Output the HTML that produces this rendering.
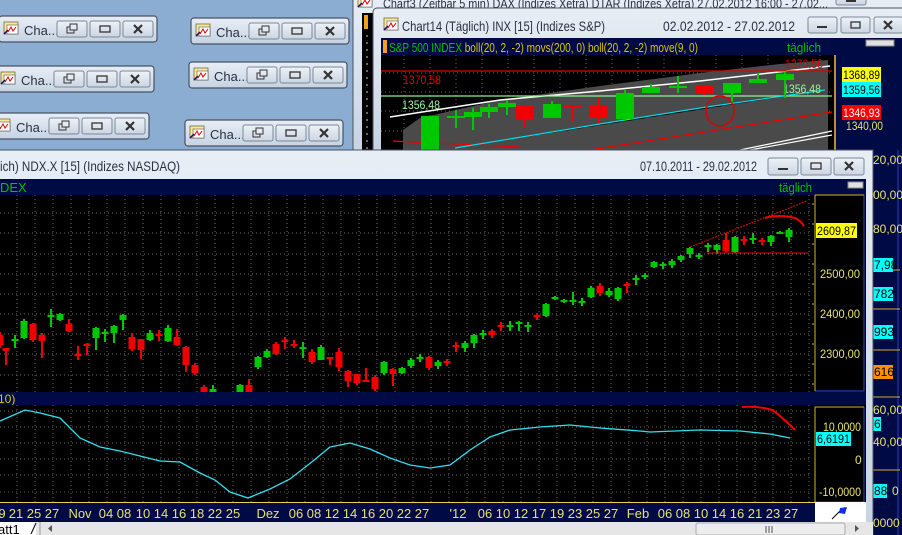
<!DOCTYPE html>
<html><head><meta charset="utf-8"><style>
html,body{margin:0;padding:0;width:902px;height:535px;overflow:hidden;background:#8badd2}
svg{display:block}
text{font-family:"Liberation Sans",sans-serif}
</style></head><body>
<svg width="902" height="535" viewBox="0 0 902 535" xmlns="http://www.w3.org/2000/svg">
<defs>
<linearGradient id="bar" x1="0" y1="0" x2="0" y2="1"><stop offset="0" stop-color="#e8eef6"/><stop offset="1" stop-color="#c6d3e3"/></linearGradient>
<linearGradient id="btn" x1="0" y1="0" x2="0" y2="1"><stop offset="0" stop-color="#eef2f8"/><stop offset="1" stop-color="#cbd5e2"/></linearGradient>
<g id="ico"><rect x="0" y="0" width="14" height="12" fill="#f4e8a0" stroke="#7a6a30" stroke-width="0.8"/><rect x="3" y="3" width="11" height="9" fill="#fff" stroke="#555" stroke-width="0.6"/><path d="M4 10 L7 5 L9 9 L12 5" stroke="#d00" fill="none" stroke-width="1"/><path d="M0 12 L4 8" stroke="#208" stroke-width="1.5"/></g>
<g id="b3">
<rect x="0" y="0" width="30" height="16" rx="2" fill="url(#btn)" stroke="#7c8797"/>
<rect x="33" y="0" width="30" height="16" rx="2" fill="url(#btn)" stroke="#7c8797"/>
<rect x="66" y="0" width="30" height="16" rx="2" fill="url(#btn)" stroke="#7c8797"/>
<rect x="10" y="6" width="7" height="6" fill="none" stroke="#333"/><rect x="13" y="3" width="7" height="6" fill="#e4eaf2" stroke="#333"/>
<rect x="43" y="5" width="10" height="6" fill="none" stroke="#333" stroke-width="1.3"/>
<path d="M77 4 L85 12 M85 4 L77 12" stroke="#333" stroke-width="2.2"/>
</g>
<g id="mini"><rect x="0" y="0" width="158" height="26" rx="3" fill="url(#bar)" stroke="#4a5262" stroke-width="1.2"/><use href="#ico" x="5" y="6"/><text x="25" y="19" font-size="13" fill="#2a3140">Cha...</text><use href="#b3" x="58" y="5"/></g>
</defs>

<use href="#mini" x="-1" y="16"/>
<use href="#mini" x="191" y="18"/>
<use href="#mini" x="-4" y="66"/>
<use href="#mini" x="189" y="62"/>
<use href="#mini" x="-9" y="113"/>
<use href="#mini" x="185" y="120"/>

<!-- Chart3 back window -->
<rect x="353" y="-5" width="560" height="160" fill="url(#bar)" stroke="#4a5262"/>
<use href="#ico" x="358" y="-5"/>
<text x="383" y="8" font-size="13" fill="#2a3140" textLength="445" lengthAdjust="spacingAndGlyphs">Chart3 (Zeitbar 5 min)  DAX (Indizes Xetra) DTAR (Indizes Xetra) 27.02.2012 16:00 - 27.02...</text>
<rect x="836" y="-8" width="30" height="13" rx="2" fill="url(#btn)" stroke="#7c8797"/><rect x="846" y="0" width="10" height="2" fill="#333"/>
<rect x="362" y="13" width="14" height="140" fill="#000"/>
<rect x="364" y="15" width="4" height="14" fill="#f0a020"/>
<path d="M367 35 V150" stroke="#ccc" stroke-dasharray="2,5"/>

<!-- Chart14 window -->
<rect x="373" y="8" width="540" height="150" rx="4" fill="url(#bar)" stroke="#4a5262"/>
<use href="#ico" x="384" y="18"/>
<text x="402" y="31" font-size="14" fill="#2a3140" textLength="203" lengthAdjust="spacingAndGlyphs">Chart14 (Täglich)  INX [15] (Indizes S&amp;P)</text>
<text x="663" y="31" font-size="14" fill="#2a3140" textLength="132" lengthAdjust="spacingAndGlyphs">02.02.2012 - 27.02.2012</text>
<g transform="translate(788,17)"><rect x="20" y="0" width="29" height="16" rx="2" fill="url(#btn)" stroke="#7c8797"/><rect x="53" y="0" width="29" height="16" rx="2" fill="url(#btn)" stroke="#7c8797"/><rect x="86" y="0" width="29" height="16" rx="2" fill="url(#btn)" stroke="#7c8797"/><rect x="29" y="9" width="10" height="2" fill="#333"/><rect x="63" y="5" width="9" height="6" fill="none" stroke="#333" stroke-width="1.3"/><path d="M96 4 L104 12 M104 4 L96 12" stroke="#333" stroke-width="2.2"/></g>
<rect x="381" y="38" width="530" height="17" fill="#000a44"/>
<rect x="383" y="40" width="4" height="13" fill="#f0a020"/>
<text x="389" y="52" font-size="13" fill="#00c000" textLength="309" lengthAdjust="spacingAndGlyphs">S&amp;P 500 INDEX <tspan fill="#d8c800">boll(20, 2, -2) movs(200, 0) boll(20, 2, -2) move(9, 0)</tspan></text>
<text x="787" y="52" font-size="13" fill="#00c000" textLength="34" lengthAdjust="spacingAndGlyphs">täglich</text>
<rect x="866" y="40" width="28" height="6" fill="#e0e0e0" stroke="#888"/>
<rect x="381" y="55" width="454" height="100" fill="#000"/>
<g stroke="#666" stroke-dasharray="1,3">
<path d="M381 73 H832 M381 92 H832 M381 111 H832 M381 131 H832"/>
<path d="M404 55 V150 M430 55 V150 M456 55 V150 M482 55 V150 M508 55 V150 M534 55 V150 M560 55 V150 M586 55 V150 M612 55 V150 M638 55 V150 M664 55 V150 M690 55 V150 M716 55 V150 M742 55 V150 M768 55 V150 M794 55 V150 M820 55 V150"/>
</g>
<polygon points="403,150 403,130 420,118 500,100 600,86 700,73 780,64 828,60 828,150" fill="#4a4a4a"/>
<path d="M390 117 L500 100 L600 91 L700 81 L830 66" stroke="#fff" stroke-width="1.5" fill="none"/>
<path d="M740 150 L832 131 M750 150 L832 135" stroke="#fff" stroke-width="1.2"/>
<path d="M381 71 H832" stroke="#e00000" stroke-width="1.2"/>
<path d="M381 96 H832" stroke="#90f090" stroke-width="1.2"/>
<path d="M393 141 L520 147 M590 150 L832 112" stroke="#f00000" stroke-width="1.2"/>
<path d="M455 148 L600 124 L700 108 L825 90" stroke="#00e0f0" stroke-width="1.2"/>
<text x="403" y="84" font-size="12" fill="#e00000" textLength="38" lengthAdjust="spacingAndGlyphs">1370,58</text>
<text x="402" y="109" font-size="12" fill="#a0f0a0" textLength="38" lengthAdjust="spacingAndGlyphs">1356,48</text>
<text x="783" y="93" font-size="12" fill="#a0f0a0" textLength="38" lengthAdjust="spacingAndGlyphs">1356,48</text>
<text x="785" y="68" font-size="12" fill="#e00000" textLength="38" lengthAdjust="spacingAndGlyphs">1370,58</text>
<g fill="#00c800" stroke="#00c800" stroke-width="2">
<rect x="421" y="116" width="18" height="40" stroke="none"/>
<path d="M456 110 V128 M473 108 V130 M489 104 V118 M507 100 V115 M552 101 V118 M625 90 V121 M651 84 V93 M678 76 V93 M732 83 V103 M758 73 V83 M785 72 V98"/>
<rect x="447" y="116" width="18" height="2" stroke="none"/><rect x="464" y="112" width="18" height="5" stroke="none"/><rect x="480" y="107" width="18" height="5" stroke="none"/><rect x="498" y="103" width="18" height="4" stroke="none"/><rect x="543" y="104" width="18" height="14" stroke="none"/><rect x="616" y="93" width="18" height="26" stroke="none"/><rect x="642" y="87" width="18" height="6" stroke="none"/><rect x="669" y="86" width="18" height="2" stroke="none"/><rect x="723" y="83" width="18" height="10" stroke="none"/><rect x="749" y="79" width="18" height="4" stroke="none"/><rect x="776" y="74" width="18" height="6" stroke="none"/>
</g>
<g fill="#f00000" stroke="#f00000" stroke-width="2">
<path d="M525 105 V127 M572 106 V122 M598 97 V123 M704 86 V95"/>
<rect x="516" y="105" width="18" height="14" stroke="none"/><rect x="563" y="105" width="18" height="2" stroke="none"/><rect x="589" y="106" width="18" height="11" stroke="none"/><rect x="695" y="86" width="18" height="7" stroke="none"/>
</g>
<ellipse cx="720" cy="111" rx="14" ry="15" fill="none" stroke="#e00000" stroke-width="1.5"/>
<rect x="835" y="55" width="70" height="100" fill="#000a44"/>
<path d="M835 55 V155" stroke="#e8c040" stroke-width="1.5"/>
<rect x="842" y="67" width="39" height="15" fill="#ffff00"/><text x="843" y="79" font-size="12" fill="#000" textLength="37" lengthAdjust="spacingAndGlyphs">1368,89</text>
<rect x="842" y="82" width="39" height="15" fill="#00ffff"/><text x="843" y="94" font-size="12" fill="#000" textLength="37" lengthAdjust="spacingAndGlyphs">1359,56</text>
<rect x="842" y="105" width="39" height="15" fill="#ff0000"/><text x="843" y="117" font-size="12" fill="#fff" textLength="37" lengthAdjust="spacingAndGlyphs">1346,93</text>
<text x="846" y="130" font-size="12" fill="#e8e070" textLength="37" lengthAdjust="spacingAndGlyphs">1340,00</text>

<!-- right strip -->
<rect x="870" y="150" width="32" height="385" fill="#000a44"/>
<path d="M898 150 V535" stroke="#2040d0"/>
<g stroke="#d8b030"><path d="M873 270 H900 M873 309 H900 M873 350 H900 M873 397 H900 M873 470 H900"/></g>
<g font-size="12" fill="#e8e070"><text x="873" y="164">20,00</text><text x="873" y="199">00,00</text><text x="873" y="233">80,00</text><text x="873" y="414">60,00</text><text x="873" y="446">40,00</text><text x="892" y="495">0</text><text x="873" y="527">0000</text></g>
<rect x="873" y="258" width="20" height="14" fill="#00ffff"/><text x="874" y="269" font-size="12" fill="#000">7,98</text>
<rect x="873" y="287" width="20" height="14" fill="#00ffff"/><text x="874" y="298" font-size="12" fill="#000">782</text>
<rect x="873" y="325" width="20" height="14" fill="#00ffff"/><text x="874" y="336" font-size="12" fill="#000">993</text>
<rect x="873" y="365" width="20" height="14" fill="#ff9000"/><text x="874" y="376" font-size="12" fill="#000">616</text>
<rect x="873" y="417" width="8" height="14" fill="#00ffff"/><text x="874" y="428" font-size="12" fill="#000">6</text>
<rect x="873" y="484" width="14" height="14" fill="#00ffff"/><text x="874" y="495" font-size="12" fill="#000">88</text>

<!-- main window -->
<rect x="-5" y="150" width="878" height="390" fill="url(#bar)" stroke="#4a5262"/>
<text x="0" y="171" font-size="14" fill="#2a3140" textLength="180" lengthAdjust="spacingAndGlyphs">ich)  NDX.X [15] (Indizes NASDAQ)</text>
<text x="640" y="171" font-size="14" fill="#2a3140" textLength="117" lengthAdjust="spacingAndGlyphs">07.10.2011 - 29.02.2012</text>
<g transform="translate(768,158)"><rect x="0" y="0" width="30" height="17" rx="2" fill="url(#btn)" stroke="#7c8797"/><rect x="33" y="0" width="30" height="17" rx="2" fill="url(#btn)" stroke="#7c8797"/><rect x="66" y="0" width="30" height="17" rx="2" fill="url(#btn)" stroke="#7c8797"/><rect x="10" y="10" width="10" height="2" fill="#333"/><rect x="43" y="5" width="10" height="6" fill="none" stroke="#333" stroke-width="1.3"/><path d="M77 4 L85 12 M85 4 L77 12" stroke="#333" stroke-width="2.2"/></g>
<rect x="0" y="179" width="866" height="16" fill="#000a44"/>
<text x="0" y="192" font-size="13" fill="#00c000">DEX</text>
<text x="779" y="192" font-size="13" fill="#00c000" textLength="33" lengthAdjust="spacingAndGlyphs">täglich</text>
<rect x="848" y="182" width="15" height="6" fill="#e0e0e0" stroke="#888"/>
<rect x="0" y="195" width="866" height="197" fill="#000"/>
<g stroke="#6a6a6a" stroke-dasharray="1,3">
<path d="M0 213 H812 M0 233 H812 M0 254 H812 M0 274 H812 M0 294 H812 M0 314 H812 M0 334 H812 M0 354 H812 M0 375 H812"/>
<path d="M17 195 V392 M35 195 V392 M53 195 V392 M71 195 V392 M89 195 V392 M107 195 V392 M125 195 V392 M143 195 V392 M161 195 V392 M179 195 V392 M197 195 V392 M215 195 V392 M233 195 V392 M251 195 V392 M269 195 V392 M287 195 V392 M305 195 V392 M323 195 V392 M341 195 V392 M359 195 V392 M377 195 V392 M395 195 V392 M413 195 V392 M431 195 V392 M449 195 V392 M467 195 V392 M485 195 V392 M503 195 V392 M521 195 V392 M539 195 V392 M557 195 V392 M575 195 V392 M593 195 V392 M611 195 V392 M629 195 V392 M647 195 V392 M665 195 V392 M683 195 V392 M701 195 V392 M719 195 V392 M737 195 V392 M755 195 V392 M773 195 V392 M791 195 V392 M809 195 V392"/>
</g>
<g fill="#00c800" stroke="#00c800" stroke-width="2">
<path d="M15 335V348M24 319V339M51 309V327M60 313V321M96 327V350M105 329V342M114 325V343M123 314V330M150 330V341M168 325V342M213 385V392M240 384V392M258 356V369M267 349V358M303 342V358M321 345V360M384 361V375M402 367V374M411 358V368M420 354V362M438 360V369M465 341V352M474 334V348M483 330V339M510 321V331M519 321V331M528 322V332M546 303V317M555 296V300M564 299V303M573 292V305M582 298V306M591 286V298M609 288V297M618 287V301M636 275V285M645 273V279M654 261V268M663 262V269M672 259V268M681 255V262M690 247V258M699 253V259M708 243V252M717 244V254M735 236V253M753 233V244M771 235V246M780 231V234M789 228V242"/>
<g stroke="none">
<rect x="11.5" y="339" width="7" height="2"/><rect x="20.5" y="321" width="7" height="17"/><rect x="47.5" y="315" width="7" height="2"/><rect x="56.5" y="314" width="7" height="6"/><rect x="92.5" y="328" width="7" height="10"/><rect x="101.5" y="332" width="7" height="2"/><rect x="110.5" y="326" width="7" height="7"/><rect x="119.5" y="315" width="7" height="5"/><rect x="146.5" y="333" width="7" height="7"/><rect x="164.5" y="328" width="7" height="13"/><rect x="209.5" y="389" width="7" height="3"/><rect x="236.5" y="385" width="7" height="7"/><rect x="254.5" y="357" width="7" height="10"/><rect x="263.5" y="351" width="7" height="6"/><rect x="299.5" y="347" width="7" height="2"/><rect x="317.5" y="347" width="7" height="13"/><rect x="380.5" y="362" width="7" height="11"/><rect x="398.5" y="368" width="7" height="5"/><rect x="407.5" y="360" width="7" height="6"/><rect x="416.5" y="357" width="7" height="2"/><rect x="434.5" y="362" width="7" height="4"/><rect x="461.5" y="343" width="7" height="5"/><rect x="470.5" y="335" width="7" height="8"/><rect x="479.5" y="333" width="7" height="2"/><rect x="506.5" y="325" width="7" height="2"/><rect x="515.5" y="322" width="7" height="2"/><rect x="524.5" y="325" width="7" height="2"/><rect x="542.5" y="304" width="7" height="12"/><rect x="551.5" y="297" width="7" height="2"/><rect x="560.5" y="300" width="7" height="2"/><rect x="569.5" y="300" width="7" height="2"/><rect x="578.5" y="301" width="7" height="2"/><rect x="587.5" y="288" width="7" height="9"/><rect x="605.5" y="291" width="7" height="4"/><rect x="614.5" y="288" width="7" height="11"/><rect x="632.5" y="278" width="7" height="2"/><rect x="641.5" y="275" width="7" height="2"/><rect x="650.5" y="262" width="7" height="5"/><rect x="659.5" y="264" width="7" height="2"/><rect x="668.5" y="261" width="7" height="4"/><rect x="677.5" y="256" width="7" height="4"/><rect x="686.5" y="248" width="7" height="6"/><rect x="695.5" y="255" width="7" height="2"/><rect x="704.5" y="245" width="7" height="2"/><rect x="713.5" y="245" width="7" height="5"/><rect x="731.5" y="237" width="7" height="15"/><rect x="749.5" y="238" width="7" height="2"/><rect x="767.5" y="236" width="7" height="6"/><rect x="776.5" y="232" width="7" height="2"/><rect x="785.5" y="230" width="7" height="7"/>
</g></g>
<g fill="#f00000" stroke="#f00000" stroke-width="2">
<path d="M0 332V348M6 348V365M33 323V342M42 333V358M69 319V332M78 346V360M87 343V355M132 333V351M141 339V359M159 330V341M177 329V346M186 346V372M195 363V375M204 385V392M249 379V392M276 342V355M285 337V349M294 340V348M312 349V364M330 357V365M339 348V371M348 370V387M357 374V385M366 368V382M375 375V391M393 368V386M429 356V370M447 359V366M456 342V352M492 329V338M501 322V331M537 313V320M600 283V296M627 282V293M726 233V252M744 236V245M762 238V245"/>
<g stroke="none">
<rect x="-3.5" y="335" width="7" height="10"/><rect x="2.5" y="348" width="7" height="3"/><rect x="29.5" y="324" width="7" height="16"/><rect x="38.5" y="335" width="7" height="6"/><rect x="65.5" y="324" width="7" height="7"/><rect x="74.5" y="354" width="7" height="2"/><rect x="83.5" y="344" width="7" height="2"/><rect x="128.5" y="337" width="7" height="12"/><rect x="137.5" y="339" width="7" height="11"/><rect x="155.5" y="334" width="7" height="2"/><rect x="173.5" y="337" width="7" height="8"/><rect x="182.5" y="347" width="7" height="18"/><rect x="191.5" y="365" width="7" height="8"/><rect x="200.5" y="387" width="7" height="5"/><rect x="245.5" y="385" width="7" height="7"/><rect x="272.5" y="344" width="7" height="10"/><rect x="281.5" y="340" width="7" height="2"/><rect x="290.5" y="344" width="7" height="2"/><rect x="308.5" y="352" width="7" height="10"/><rect x="326.5" y="357" width="7" height="2"/><rect x="335.5" y="352" width="7" height="15"/><rect x="344.5" y="371" width="7" height="10"/><rect x="353.5" y="374" width="7" height="9"/><rect x="362.5" y="380" width="7" height="2"/><rect x="371.5" y="377" width="7" height="12"/><rect x="389.5" y="369" width="7" height="5"/><rect x="425.5" y="357" width="7" height="11"/><rect x="443.5" y="361" width="7" height="2"/><rect x="452.5" y="345" width="7" height="2"/><rect x="488.5" y="331" width="7" height="4"/><rect x="497.5" y="325" width="7" height="2"/><rect x="533.5" y="315" width="7" height="2"/><rect x="596.5" y="286" width="7" height="7"/><rect x="623.5" y="284" width="7" height="2"/><rect x="722.5" y="240" width="7" height="11"/><rect x="740.5" y="239" width="7" height="2"/><rect x="758.5" y="240" width="7" height="2"/>
</g></g>
<path d="M690 247 L807 201" stroke="#f00000" stroke-width="1" stroke-dasharray="2,1"/>
<path d="M707 253 H808" stroke="#f00000" stroke-width="1"/>
<path d="M765 218 Q780 214 795 218 Q801 221 804 226" stroke="#f00000" stroke-width="2" fill="none"/>
<rect x="815" y="195" width="49" height="196" fill="#000" stroke="#2050d0"/>
<path d="M815 195 V391 M815 195 H864" stroke="#d8b030"/>
<g stroke="#aaa" stroke-dasharray="2,18"><path d="M813 203 V391"/></g>
<rect x="816" y="223" width="41" height="15" fill="#ffff00"/><text x="817" y="235" font-size="12" fill="#000" textLength="39" lengthAdjust="spacingAndGlyphs">2609,87</text>
<g font-size="12" fill="#e8e070"><text x="820" y="278" textLength="40" lengthAdjust="spacingAndGlyphs">2500,00</text><text x="820" y="318" textLength="40" lengthAdjust="spacingAndGlyphs">2400,00</text><text x="820" y="358" textLength="40" lengthAdjust="spacingAndGlyphs">2300,00</text></g>
<rect x="0" y="392" width="866" height="13" fill="#000a44"/>
<text x="-2" y="403" font-size="12" fill="#d8c800">10)</text>
<rect x="0" y="405" width="866" height="97" fill="#000"/>
<g stroke="#6a6a6a" stroke-dasharray="1,3">
<path d="M0 411 H812 M0 427 H812 M0 443 H812 M0 459 H812 M0 475 H812 M0 492 H812"/>
<path d="M17 405V502M35 405V502M53 405V502M71 405V502M89 405V502M107 405V502M125 405V502M143 405V502M161 405V502M179 405V502M197 405V502M215 405V502M233 405V502M251 405V502M269 405V502M287 405V502M305 405V502M323 405V502M341 405V502M359 405V502M377 405V502M395 405V502M413 405V502M431 405V502M449 405V502M467 405V502M485 405V502M503 405V502M521 405V502M539 405V502M557 405V502M575 405V502M593 405V502M611 405V502M629 405V502M647 405V502M665 405V502M683 405V502M701 405V502M719 405V502M737 405V502M755 405V502M773 405V502M791 405V502M809 405V502"/>
</g>
<polyline points="0,421 25,410 40,413 60,418 80,438 100,447 120,451 140,456 160,461 180,462 200,473 215,480 230,492 248,498 270,489 290,479 313,461 330,447 350,443 370,449 390,458 410,465 430,468 450,465 470,450 490,437 510,430 540,427 570,425 600,428 640,431 650,432 700,430 740,431 770,434 790,438" fill="none" stroke="#30e0f0" stroke-width="1.3"/>
<path d="M742 407 Q760 406 772 410 Q780 415 795 430" stroke="#f00000" stroke-width="2" fill="none"/>
<rect x="815" y="407" width="49" height="95" fill="#000" stroke="#2050d0"/>
<path d="M815 407 V502 M815 407 H864" stroke="#d8b030"/>
<g font-size="12" fill="#e8e070"><text x="823" y="431" textLength="38" lengthAdjust="spacingAndGlyphs">10,0000</text><text x="855" y="464">0</text><text x="819" y="496" textLength="42" lengthAdjust="spacingAndGlyphs">-10,0000</text></g>
<rect x="816" y="432" width="35" height="14" fill="#00ffff"/><text x="817" y="443" font-size="12" fill="#000" textLength="33" lengthAdjust="spacingAndGlyphs">6,6191</text>
<rect x="0" y="502" width="815" height="20" fill="#000a44"/>
<path d="M0 502.5 H815" stroke="#e8d060"/>
<g font-size="13" fill="#e8e070" text-anchor="middle">
<text x="2" y="518">9</text><text x="16" y="518">21</text><text x="34" y="518">25</text><text x="52" y="518">27</text><text x="80" y="518">Nov</text><text x="106" y="518">04</text><text x="124" y="518">08</text><text x="143" y="518">10</text><text x="161" y="518">14</text><text x="179" y="518">16</text><text x="197" y="518">18</text><text x="215" y="518">22</text><text x="233" y="518">25</text><text x="268" y="518">Dez</text><text x="296" y="518">06</text><text x="314" y="518">08</text><text x="332" y="518">12</text><text x="350" y="518">14</text><text x="368" y="518">16</text><text x="386" y="518">20</text><text x="404" y="518">22</text><text x="422" y="518">27</text><text x="458" y="518">'12</text><text x="485" y="518">06</text><text x="503" y="518">10</text><text x="521" y="518">12</text><text x="539" y="518">17</text><text x="557" y="518">19</text><text x="575" y="518">23</text><text x="593" y="518">25</text><text x="611" y="518">27</text><text x="638" y="518">Feb</text><text x="665" y="518">06</text><text x="683" y="518">08</text><text x="701" y="518">10</text><text x="719" y="518">14</text><text x="737" y="518">16</text><text x="755" y="518">21</text><text x="773" y="518">23</text><text x="791" y="518">27</text>
</g>
<rect x="815" y="502" width="51" height="20" fill="#fff"/>
<path d="M832 519 L842 509" stroke="#000" stroke-width="1"/><path d="M840 508 L847 507 L845 514 L839 513 Z" fill="#1030e0"/>
<rect x="0" y="522" width="873" height="13" fill="#e6e6e6"/>
<rect x="0" y="522" width="36" height="13" fill="#fff"/>
<text x="-2" y="534" font-size="13" fill="#000">att1</text>
<path d="M31 534 L36 523" stroke="#000"/>
<path d="M40 522 V535" stroke="#999"/>
<path d="M52 525 L48 528.5 L52 532 Z" fill="#555"/>
<rect x="696" y="523" width="149" height="12" rx="2" fill="#ededed" stroke="#aaa"/>
<path d="M766 526 V533 M769 526 V533 M772 526 V533" stroke="#555"/>
<path d="M855 525 L859 528.5 L855 532 Z" fill="#555"/>
</svg>
</body></html>
